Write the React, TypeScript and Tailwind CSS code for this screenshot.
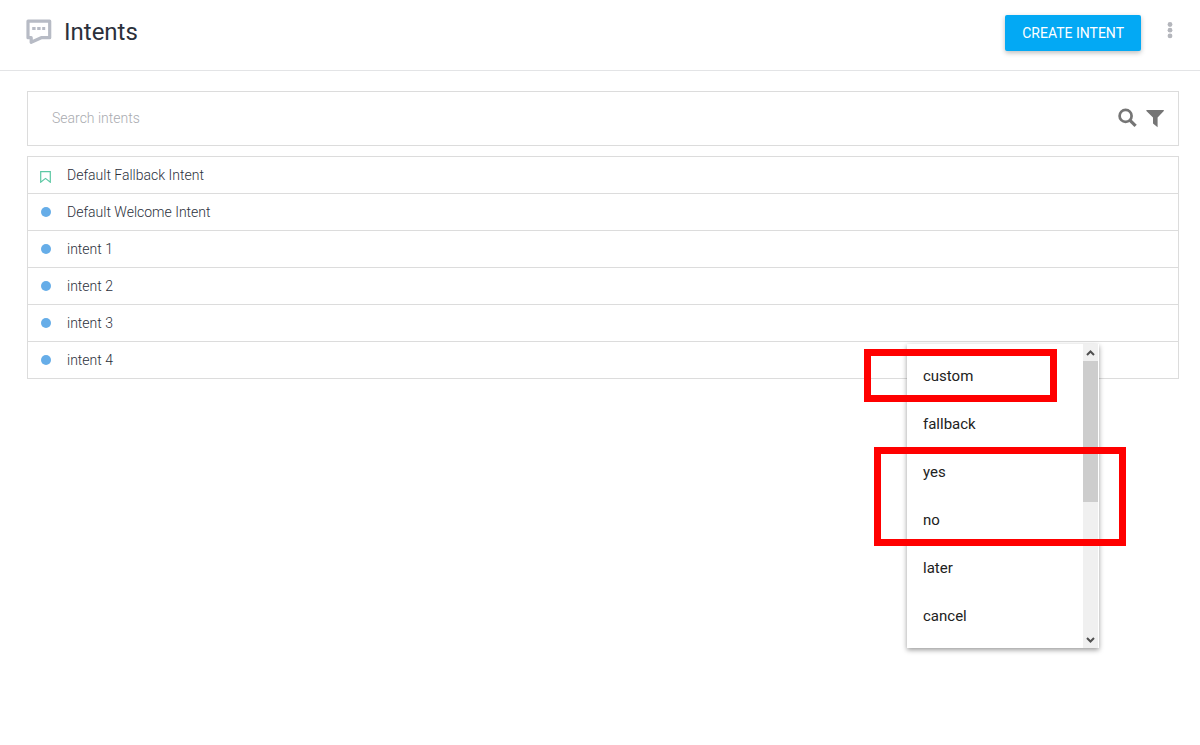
import React from "react";

type Intent = { name: string; fallback?: boolean };

const intents: Intent[] = [
  { name: "Default Fallback Intent", fallback: true },
  { name: "Default Welcome Intent" },
  { name: "intent 1" },
  { name: "intent 2" },
  { name: "intent 3" },
  { name: "intent 4" },
];

const followUps = ["custom", "fallback", "yes", "no", "later", "cancel"];

function ChatIcon() {
  return (
    <svg className="h-[26px] w-[26px] shrink-0" viewBox="0 0 26 26" fill="none" aria-hidden="true">
      <path
        d="M2 2.2h21.7v16.5h-8.5L5.2 23.3v-4.6H2z"
        stroke="#b7bbc5"
        strokeWidth="3.2"
        strokeLinejoin="round"
      />
      <path d="M6.2 8h3.4v3H6.2zM11.2 8h3.4v3h-3.4zM16.2 8h3v3h-3z" fill="#b7bbc5" />
    </svg>
  );
}

function Header() {
  return (
    <header className="flex h-[71px] items-start border-b border-[#e3e4e6] pr-[17px] pl-[26px]">
      <div className="flex items-center gap-3 pt-4">
        <ChatIcon />
        <h1 className="text-2xl leading-8 text-[#2b303b]">Intents</h1>
      </div>
      <div className="ml-auto flex items-start gap-[15px] pt-[15px]">
        <button
          type="button"
          className="h-9 rounded-xs bg-[#03a9f4] px-[17px] text-sm text-white shadow-[0_2px_5px_rgba(0,0,0,0.26)]"
        >
          CREATE INTENT
        </button>
        <button type="button" aria-label="More options" className="flex h-8 w-[27px] items-center justify-center">
          <svg className="h-5 w-2" viewBox="0 0 8 20" fill="#b4b6bc" aria-hidden="true">
            <circle cx="4" cy="3.5" r="2.4" />
            <circle cx="4" cy="9.2" r="2.4" />
            <circle cx="4" cy="14.9" r="2.4" />
          </svg>
        </button>
      </div>
    </header>
  );
}

function SearchBar() {
  return (
    <form className="flex h-[55px] items-center border border-[#dcdcdc] pr-[9px] pb-0.5 pl-6">
      <input
        type="text"
        aria-label="Search intents"
        placeholder="Search intents"
        className="h-9 min-w-0 flex-1 bg-transparent text-sm font-light text-[#2b303b] outline-none placeholder:text-[#a9abb0]"
      />
      <button type="button" aria-label="Search" className="flex h-7 w-7 items-center justify-center">
        <svg className="h-5 w-5" viewBox="0 0 20 20" fill="none" stroke="#757575" aria-hidden="true">
          <circle cx="8.6" cy="7.9" r="6" strokeWidth="2.7" />
          <path d="M13 12.3l5.6 5.6" strokeWidth="3.2" />
        </svg>
      </button>
      <button type="button" aria-label="Filter" className="flex h-7 w-7 items-center justify-center">
        <svg className="h-5 w-5" viewBox="0 0 20 20" fill="#757575" aria-hidden="true">
          <path d="M1.4 1.9h17.4v1.2L12.6 9.4v9.8L8 15.6V9.4L1.4 3.1z" />
        </svg>
      </button>
    </form>
  );
}

function IntentRow({ intent }: { intent: Intent }) {
  return (
    <li className="flex h-[37px] items-center gap-4 border-b border-[#dcdcdc] pl-3">
      {intent.fallback ? (
        <svg className="mt-1 h-3 w-[11px] shrink-0" viewBox="0 0 11 12" fill="none" stroke="#5cc8a4" aria-hidden="true">
          <path d="M.7.6h9.6v10.6L5.5 7.4.7 11.2z" strokeWidth="1.2" />
        </svg>
      ) : (
        <span className="ml-px h-2.5 w-2.5 shrink-0 rounded-full bg-[#66ade8]" />
      )}
      <a href="#intent" className="text-sm font-light text-[#2b303b]">
        {intent.name}
      </a>
    </li>
  );
}

function FollowUpMenu() {
  return (
    <div className="absolute top-[188px] right-20 flex w-48 bg-white shadow-[0_2px_5px_rgba(0,0,0,0.4)]">
      <div role="menu" className="flex flex-1 flex-col py-2">
        {followUps.map((label) => (
          <button
            key={label}
            type="button"
            role="menuitem"
            className="h-12 px-4 text-left text-[15px] text-[#212121]"
          >
            {label}
          </button>
        ))}
      </div>
      <div className="mr-px flex w-[15px] flex-col bg-[#f0f0f0]" aria-hidden="true">
        <svg className="h-[17px] w-[15px]" viewBox="0 0 15 17" fill="none" stroke="#505050">
          <path d="M4 11l3.5-3.5L11 11" strokeWidth="2" />
        </svg>
        <div className="h-[141px] bg-[#cdcdcd]" />
        <svg className="mt-auto h-[17px] w-[15px]" viewBox="0 0 15 17" fill="none" stroke="#505050">
          <path d="M4 7l3.5 3.5L11 7" strokeWidth="2" />
        </svg>
      </div>
      <div className="pointer-events-none absolute top-[5px] right-[42px] h-[53px] w-[193px] border-[7px] border-[#ff0000]" />
      <div className="pointer-events-none absolute top-[103px] right-[-27px] h-[99px] w-[252px] border-[7px] border-[#ff0000]" />
    </div>
  );
}

export default function App() {
  return (
    <div className="min-h-screen bg-white font-['Roboto',sans-serif]">
      <Header />
      <main className="flex flex-col gap-2.5 pt-5 pr-[21px] pb-24 pl-[27px]">
        <SearchBar />
        <div className="relative">
          <ul className="border-x border-t border-[#dcdcdc]">
            {intents.map((intent) => (
              <IntentRow key={intent.name} intent={intent} />
            ))}
          </ul>
          <FollowUpMenu />
        </div>
      </main>
    </div>
  );
}
